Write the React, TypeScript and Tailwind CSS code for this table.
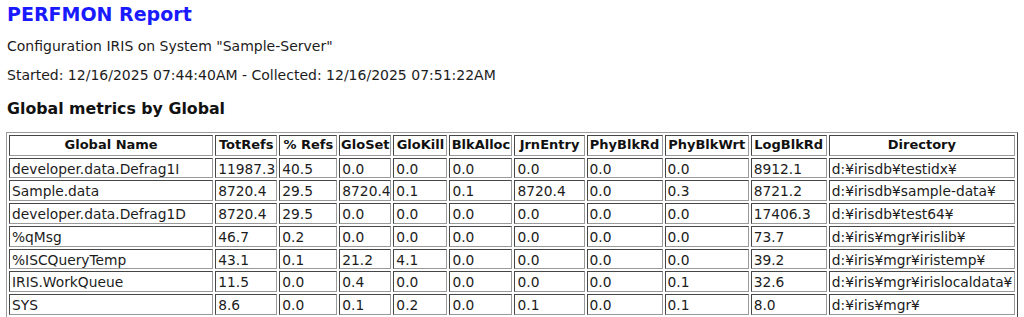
import React from "react";

const headers = [
  { t: "Global Name", w: "w-[204px]" },
  { t: "TotRefs", w: "w-[62px]" },
  { t: "% Refs", w: "w-[58px]" },
  { t: "GloSet", w: "w-[52px]" },
  { t: "GloKill", w: "w-[54px]" },
  { t: "BlkAlloc", w: "w-[63px]" },
  { t: "JrnEntry", w: "w-[70px]" },
  { t: "PhyBlkRd", w: "w-[76px]" },
  { t: "PhyBlkWrt", w: "w-[84px]" },
  { t: "LogBlkRd", w: "w-[76px]" },
  { t: "Directory", w: "w-[186px]" },
];

const rows: string[][] = [
  ["developer.data.Defrag1I", "11987.3", "40.5", "0.0", "0.0", "0.0", "0.0", "0.0", "0.0", "8912.1", "d:¥irisdb¥testidx¥"],
  ["Sample.data", "8720.4", "29.5", "8720.4", "0.1", "0.1", "8720.4", "0.0", "0.3", "8721.2", "d:¥irisdb¥sample-data¥"],
  ["developer.data.Defrag1D", "8720.4", "29.5", "0.0", "0.0", "0.0", "0.0", "0.0", "0.0", "17406.3", "d:¥irisdb¥test64¥"],
  ["%qMsg", "46.7", "0.2", "0.0", "0.0", "0.0", "0.0", "0.0", "0.0", "73.7", "d:¥iris¥mgr¥irislib¥"],
  ["%ISCQueryTemp", "43.1", "0.1", "21.2", "4.1", "0.0", "0.0", "0.0", "0.0", "39.2", "d:¥iris¥mgr¥iristemp¥"],
  ["IRIS.WorkQueue", "11.5", "0.0", "0.4", "0.0", "0.0", "0.0", "0.0", "0.1", "32.6", "d:¥iris¥mgr¥irislocaldata¥"],
  ["SYS", "8.6", "0.0", "0.1", "0.2", "0.0", "0.1", "0.0", "0.1", "8.0", "d:¥iris¥mgr¥"],
];

export default function App() {
  return (
    <div className="w-[1024px] h-[317px] overflow-hidden bg-white text-[#1c1c1c] font-['DejaVu_Sans','Verdana',sans-serif] px-[6px]">
      <h1 className="pt-[2px] pl-[1px] text-[19px] leading-[24px] font-bold text-[#1a1aff]">PERFMON Report</h1>
      <p className="mt-[12px] pl-[1px] text-[14px] leading-[16px]">Configuration IRIS on System "Sample-Server"</p>
      <p className="mt-[13px] pl-[1px] text-[14px] leading-[16px]">Started: 12/16/2025 07:44:40AM - Collected: 12/16/2025 07:51:22AM</p>
      <h2 className="mt-[16px] pl-[1px] text-[15.8px] leading-[20px] font-bold text-[#111]">Global metrics by Global</h2>
      <table className="mt-[13px] w-[1012px] table-fixed border-separate border-spacing-[2px] border border-[#9a9a9a] [border-style:outset] text-[13.8px] leading-[16.7px]">
        <thead>
          <tr>
            {headers.map((h) => (
              <th
                key={h.t}
                className={`${h.w} border border-[#9a9a9a] [border-style:inset] pt-[1px] pb-[1px] px-0 text-center text-[13px] font-bold text-[#111] whitespace-nowrap overflow-hidden`}
              >
                {h.t}
              </th>
            ))}
          </tr>
        </thead>
        <tbody>
          {rows.map((r, i) => (
            <tr key={i}>
              {r.map((c, j) => (
                <td
                  key={j}
                  className="border border-[#9a9a9a] [border-style:inset] pt-[2px] pb-0 pr-px pl-[2px] text-left whitespace-nowrap overflow-hidden"
                >
                  {c}
                </td>
              ))}
            </tr>
          ))}
        </tbody>
      </table>
    </div>
  );
}
